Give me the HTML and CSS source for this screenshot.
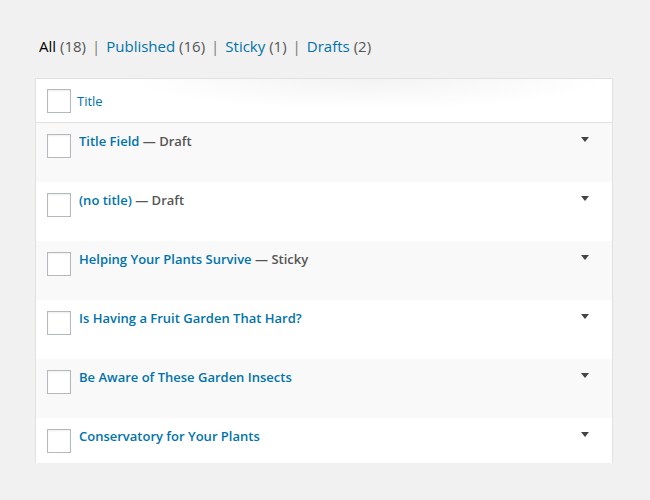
FILE: index.html
```html
<!DOCTYPE html>
<html>
<head>
<meta charset="utf-8">
<link rel="stylesheet" href="styles.css">
</head>
<body>
<div class="page">
  <ul class="filters">
    <li><span class="current">All</span> <span class="count">(18)</span></li>
    <li class="sep">|</li>
    <li><a>Published <span class="count">(16)</span></a></li>
    <li class="sep">|</li>
    <li><a>Sticky <span class="count">(1)</span></a></li>
    <li class="sep">|</li>
    <li><a>Drafts <span class="count">(2)</span></a></li>
  </ul>
  <div class="table">
    <div class="head">
      <span class="check"></span>
      <a class="head-title">Title</a>
    </div>
    <div class="row alt">
      <span class="check"></span>
      <div class="title"><a>Title Field</a> <span class="state">— Draft</span></div>
      <span class="toggle"></span>
    </div>
    <div class="row">
      <span class="check"></span>
      <div class="title"><a>(no title)</a> <span class="state">— Draft</span></div>
      <span class="toggle"></span>
    </div>
    <div class="row alt">
      <span class="check"></span>
      <div class="title"><a>Helping Your Plants Survive</a> <span class="state">— Sticky</span></div>
      <span class="toggle"></span>
    </div>
    <div class="row">
      <span class="check"></span>
      <div class="title"><a>Is Having a Fruit Garden That Hard?</a></div>
      <span class="toggle"></span>
    </div>
    <div class="row alt">
      <span class="check"></span>
      <div class="title"><a>Be Aware of These Garden Insects</a></div>
      <span class="toggle"></span>
    </div>
    <div class="row">
      <span class="check"></span>
      <div class="title"><a>Conservatory for Your Plants</a></div>
      <span class="toggle"></span>
    </div>
  </div>
</div>
</body>
</html>
```
FILE: styles.css
```css
html, body {
  margin: 0;
  padding: 0;
  background: #f1f1f1;
  font-family: "Open Sans", "Noto Sans", sans-serif;
  color: #555;
}
.page {
  padding: 35px 37px 0 35px;
  height: 465px;
  box-sizing: border-box;
}
.filters {
  list-style: none;
  margin: 0 0 0 4px;
  padding: 0;
  display: flex;
  gap: 6px;
  font-size: 15px;
  line-height: 23px;
  height: 23px;
}
.filters a { color: #0073aa; }
.current { color: #000; }
.count { color: #555; }
.sep { color: #80786e; }
.table {
  margin-top: 20px;
  background: #fff;
  border: 1px solid #e1e1e1;
  border-bottom: none;
  height: 384px;
  overflow: hidden;
}
.head {
  display: flex;
  align-items: center;
  height: 43px;
  padding-left: 11px;
  border-bottom: 1px solid #e1e1e1;
  background: radial-gradient(ellipse 240px 30px at 330px 0px, #f3f3f3, #fff);
}
.check {
  width: 22px;
  height: 22px;
  border: 1px solid #b4b9be;
  background: #fff;
  box-shadow: inset 0 1px 2px rgba(0,0,0,0.07);
  flex: none;
}
.head-title {
  margin-left: 6px;
  font-size: 13px;
  color: #0073aa;
}
.row {
  display: flex;
  align-items: flex-start;
  height: 59px;
  box-sizing: border-box;
  padding: 11px 0 0 11px;
  background: #fff;
}
.row.alt { background: #f9f9f9; }
.title {
  margin-left: 8px;
  margin-top: -1px;
  font-size: 13px;
  font-weight: 600;
  line-height: 16px;
  flex: 1;
}
.title a { color: #0073aa; }
.state { color: #555; }
.toggle {
  width: 0;
  height: 0;
  border-left: 4px solid transparent;
  border-right: 4px solid transparent;
  border-top: 5px solid #444;
  margin: 3px 23px 0 0;
}
```
